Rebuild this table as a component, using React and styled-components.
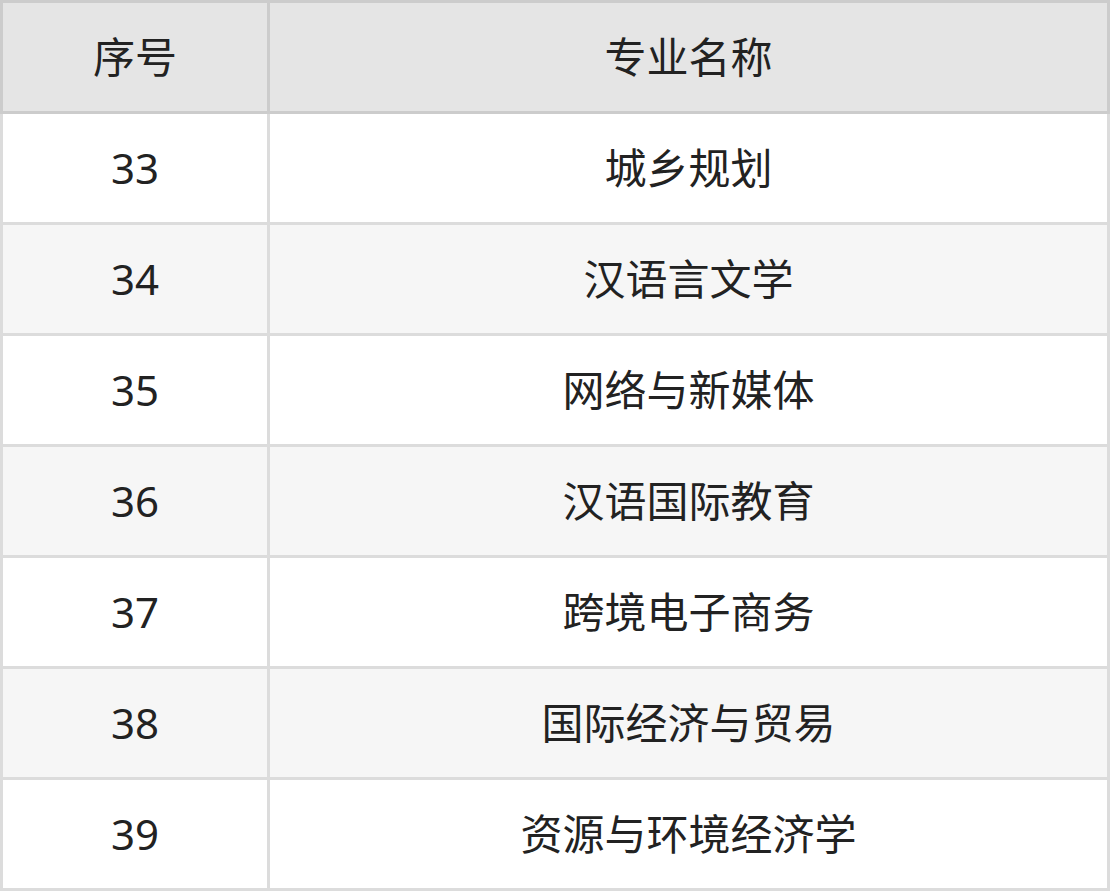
import React from 'react';
import styled, {createGlobalStyle} from 'styled-components';

const GlobalStyle = createGlobalStyle`
	html, body {
		margin: 0;
		padding: 0;
		background: #ffffff;
	}
	body {
		font-family: 'Noto Sans', 'Noto Sans CJK SC', sans-serif;
		color: #222222;
	}
`;

const Table = styled.div`
	width: 1110px;
	display: flex;
	flex-direction: column;
`;

const HeaderRow = styled.div`
	display: grid;
	grid-template-columns: 264px 1fr;
	column-gap: 3px;
	border: 3px solid #cccccc;
	background: #cccccc;
`;

const Body = styled.div`
	display: grid;
	grid-template-columns: 264px 1fr;
	grid-auto-rows: 108px;
	gap: 3px;
	border: 3px solid #dcdcdc;
	border-top: none;
	background: #dcdcdc;
`;

const Cell = styled.div`
	height: 108px;
	display: flex;
	align-items: center;
	justify-content: center;
	font-size: 42px;
	line-height: 1;
	color: #222222;
	background: ${(props) =>
		props.head ? '#e5e5e5' : props.alt ? '#f6f6f6' : '#ffffff'};
`;

const rows = [
	['33', '城乡规划'],
	['34', '汉语言文学'],
	['35', '网络与新媒体'],
	['36', '汉语国际教育'],
	['37', '跨境电子商务'],
	['38', '国际经济与贸易'],
	['39', '资源与环境经济学'],
];

export default function App() {
	return (
		<>
			<GlobalStyle />
			<Table>
				<HeaderRow>
					<Cell head>序号</Cell>
					<Cell head>专业名称</Cell>
				</HeaderRow>
				<Body>
					{rows.map(([num, name], i) => (
						<React.Fragment key={num}>
							<Cell alt={i % 2 === 1}>{num}</Cell>
							<Cell alt={i % 2 === 1}>{name}</Cell>
						</React.Fragment>
					))}
				</Body>
			</Table>
		</>
	);
}
